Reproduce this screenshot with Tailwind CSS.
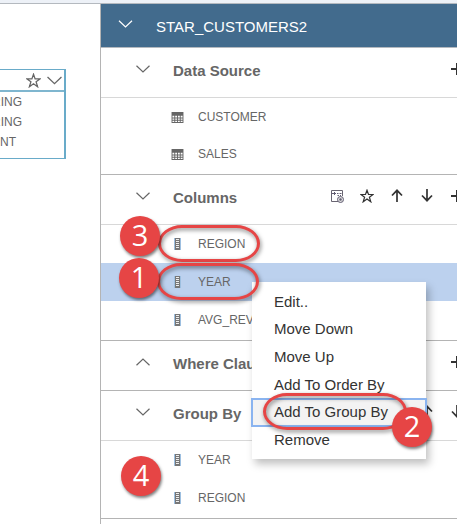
<!DOCTYPE html>
<html lang="en">
<head>
<meta charset="utf-8">
<title>STAR_CUSTOMERS2</title>
<script src="https://cdn.jsdelivr.net/npm/@tailwindcss/browser@4"></script>
</head>
<body class="relative flex min-h-screen flex-col overflow-hidden bg-white font-['Liberation_Sans',Arial,sans-serif] text-[#666]">
<svg class="hidden" aria-hidden="true">
  <symbol id="down" viewBox="0 0 14 8"><path d="M.5.7 7 7 13.500.7" fill="none" stroke="currentColor" stroke-width="1.200"/></symbol>
  <symbol id="star" viewBox="0 0 14 14"><path d="M7 1.200 8.500 5.500H13L9.400 8.200 10.800 12.800 7 10 3.200 12.800 4.600 8.200 1 5.500H5.500Z" fill="none" stroke="currentColor" stroke-width="1.200"/></symbol>
  <symbol id="plus" viewBox="0 0 12 12"><path d="M0 6H12M6 0V12" stroke="currentColor" stroke-width="2"/></symbol>
  <symbol id="arrow" viewBox="0 0 12 13"><path d="M6 13V1.500M1 6.500 6 1.300 11 6.500" fill="none" stroke="currentColor" stroke-width="1.700"/></symbol>
  <symbol id="table" viewBox="0 0 13 12"><path d="M0 0H13V12H0Z" fill="#666"/><path d="M1 4h2v2H1zM4 4h2v2H4zM7 4h2v2H7zM10 4h2v2h-2zM1 7h2v1.500H1zM4 7h2v1.500H4zM7 7h2v1.500H7zM10 7h2v1.500h-2zM1 9.500h2V11H1zM4 9.500h2V11H4zM7 9.500h2V11H7zM10 9.500h2V11h-2z" fill="#fff"/></symbol>
  <symbol id="column" viewBox="0 0 7 12"><path d="M0 0H1V12H0ZM6 0H7V12H6Z" fill="#9dbfe0"/><path d="M1 0H6V12H1Z" fill="#777"/><path d="M2 1.500H5M2 3.500H5M2 5.500H5M2 7.500H5M2 9.500H5" stroke="#eee"/></symbol>
  <symbol id="form" viewBox="0 0 14 14"><path d="M8 12.500H1.500V1.500H12.500V7" fill="none" stroke="#686471"/><path d="M1.500 4.500H6M4.500 3V6M7 4.500H8.500M9.500 4.500H11.500M7.500 6.500H9M10 6.500H11" stroke="#625d72"/><circle cx="10.500" cy="10.500" r="3" fill="#ddd" stroke="#625d72"/><circle cx="10.500" cy="10.500" r="1.200" fill="#625d72"/></symbol>
</svg>

<div class="h-[3px] bg-[#edf1f7]"></div>
<div class="flex flex-1 border-t border-[#b4b9bf]">
  <div class="w-[100px] shrink-0 overflow-hidden pt-[65px]">
    <div class="mr-[34px] h-[90px] border-y border-r-2 border-[#69abc9]">
      <div class="flex h-[22px] items-center justify-end gap-[6px] border-b-2 border-[#7fb6cf] pr-[2px]">
        <button aria-label="Favorite"><svg class="size-[15px]"><use href="#star"/></svg></button>
        <button aria-label="Expand"><svg class="h-[9px] w-[15px]"><use href="#down"/></svg></button>
      </div>
      <ul class="flex flex-col text-[12px] leading-5">
        <li class="-ml-2">RING</li>
        <li class="-ml-2">RING</li>
        <li>NT</li>
      </ul>
    </div>
  </div>

  <main class="min-w-0 flex-1 overflow-hidden border-l border-[#b4b4b4]">
    <header class="flex h-11 items-center border-b border-[#b4b9bf] bg-[#426b8d] pl-[17px] text-white">
      <button aria-label="Collapse STAR_CUSTOMERS2" class="w-[38px] pb-1"><svg class="h-[8px] w-[15px]"><use href="#down"/></svg></button>
      <h1 class="pt-1 text-[15px]">STAR_CUSTOMERS2</h1>
    </header>

    <section class="border-b border-[#b4b4b4]">
      <div class="flex h-[50px] items-center border-b border-[#d8d8d8] pl-[35px]">
        <button aria-label="Collapse" class="w-[37px] pb-2"><svg class="h-[8px] w-[14px]"><use href="#down"/></svg></button>
        <h2 class="pb-[2px] text-[15px] font-bold">Data Source</h2>
        <div class="-mr-[15px] ml-auto flex pb-2 text-[#333]">
          <button aria-label="Add" class="flex w-[30px] justify-center"><svg class="size-[12px]"><use href="#plus"/></svg></button>
        </div>
      </div>
      <ul class="text-[12px]">
        <li class="flex h-[38px] items-center gap-[14px] pl-[70px]"><svg class="h-[11px] w-[13px]"><use href="#table"/></svg>CUSTOMER</li>
        <li class="flex h-[38px] items-center gap-[14px] pb-[2px] pl-[70px]"><svg class="h-[11px] w-[13px]"><use href="#table"/></svg>SALES</li>
      </ul>
    </section>

    <section class="border-b border-[#b4b4b4]">
      <div class="flex h-[50px] items-center border-b border-[#d8d8d8] pl-[35px]">
        <button aria-label="Collapse" class="w-[37px] pb-2"><svg class="h-[8px] w-[14px]"><use href="#down"/></svg></button>
        <h2 class="pb-[2px] text-[15px] font-bold">Columns</h2>
        <div class="-mr-[15px] ml-auto flex items-center pb-2 text-[#333]">
          <button aria-label="Form" class="flex w-[30px] justify-center"><svg class="size-[14px]"><use href="#form"/></svg></button>
          <button aria-label="Favorite" class="flex w-[30px] justify-center"><svg class="size-[14px]"><use href="#star"/></svg></button>
          <button aria-label="Move up" class="flex w-[30px] justify-center"><svg class="h-[13px] w-[12px]"><use href="#arrow"/></svg></button>
          <button aria-label="Move down" class="flex w-[30px] justify-center"><svg class="h-[13px] w-[12px] rotate-180"><use href="#arrow"/></svg></button>
          <button aria-label="Add" class="flex w-[30px] justify-center"><svg class="size-[12px]"><use href="#plus"/></svg></button>
        </div>
      </div>
      <ul class="pb-px text-[12px]">
        <li class="flex h-[38px] items-center gap-[17px] pl-[73px]"><svg class="h-[12px] w-[7px]"><use href="#column"/></svg>REGION</li>
        <li class="flex h-[38px] items-center gap-[17px] bg-[#bcd1ee] pl-[73px]"><svg class="h-[12px] w-[7px]"><use href="#column"/></svg>YEAR</li>
        <li class="flex h-[38px] items-center gap-[17px] pl-[73px]"><svg class="h-[12px] w-[7px]"><use href="#column"/></svg>AVG_REVENUE</li>
      </ul>
    </section>

    <section class="flex h-[50px] items-center border-b border-[#b4b4b4] pl-[35px]">
      <button aria-label="Expand" class="w-[37px] pb-2"><svg class="h-[8px] w-[14px] rotate-180"><use href="#down"/></svg></button>
      <h2 class="pb-[2px] text-[15px] font-bold">Where Clause</h2>
      <div class="-mr-[15px] ml-auto flex pb-2 text-[#333]">
        <button aria-label="Add" class="flex w-[30px] justify-center"><svg class="size-[12px]"><use href="#plus"/></svg></button>
      </div>
    </section>

    <section class="border-b border-[#b4b4b4]">
      <div class="flex h-[50px] items-center border-b border-[#d8d8d8] pl-[35px]">
        <button aria-label="Collapse" class="w-[37px] pb-2"><svg class="h-[8px] w-[14px]"><use href="#down"/></svg></button>
        <h2 class="pb-[2px] text-[15px] font-bold">Group By</h2>
        <div class="-mr-[15px] ml-auto flex pb-2 text-[#333]">
          <button aria-label="Move up" class="flex w-[30px] justify-center"><svg class="h-[13px] w-[12px]"><use href="#arrow"/></svg></button>
          <button aria-label="Move down" class="flex w-[30px] justify-center"><svg class="h-[13px] w-[12px] rotate-180"><use href="#arrow"/></svg></button>
        </div>
      </div>
      <ul class="pb-px text-[12px]">
        <li class="flex h-[38px] items-center gap-[17px] pl-[73px]"><svg class="h-[12px] w-[7px]"><use href="#column"/></svg>YEAR</li>
        <li class="flex h-[38px] items-center gap-[17px] pl-[73px]"><svg class="h-[12px] w-[7px]"><use href="#column"/></svg>REGION</li>
      </ul>
    </section>
  </main>
</div>

<div role="menu" class="absolute top-[282px] left-[252px] grid h-[177px] w-[174px] auto-rows-fr bg-white pt-[6px] pb-[5px] text-[15px] text-[#333] shadow-[3px_5px_8px_rgba(0,0,0,0.25)]">
  <button role="menuitem" class="pl-[22px] text-left">Edit..</button>
  <button role="menuitem" class="pl-[22px] text-left">Move Down</button>
  <button role="menuitem" class="pl-[22px] text-left">Move Up</button>
  <button role="menuitem" class="pl-[22px] text-left">Add To Order By</button>
  <button role="menuitem" class="bg-[#f3f3f3] pl-[22px] text-left outline-2 -outline-offset-1 outline-[#8ab4f0]">Add To Group By</button>
  <button role="menuitem" class="pl-[22px] text-left">Remove</button>
</div>

<div class="absolute top-[225px] left-[158px] h-[37px] w-[102px] rounded-[24px/50%] border-[3px] border-[#e64545] drop-shadow-[1px_2px_2px_rgba(0,0,0,0.5)]"></div>
<div class="absolute top-[263px] left-[157px] h-[37px] w-[102px] rounded-[24px/50%] border-[3px] border-[#e64545] drop-shadow-[1px_2px_2px_rgba(0,0,0,0.5)]"></div>
<div class="absolute top-[393px] left-[263px] h-[37px] w-[144px] rounded-[24px/50%] border-[3px] border-[#e64545] drop-shadow-[1px_2px_2px_rgba(0,0,0,0.5)]"></div>

<span class="absolute top-[216px] left-[120px] flex size-10 items-center justify-center rounded-full bg-[#e64545] pb-[2px] font-['Open_Sans',sans-serif] text-[29px] text-white shadow-[1px_2px_3px_rgba(0,0,0,0.5)]">3</span>
<span class="absolute top-[258px] left-[119px] flex size-10 items-center justify-center rounded-full bg-[#e64545] pb-[2px] font-['Open_Sans',sans-serif] text-[29px] text-white shadow-[1px_2px_3px_rgba(0,0,0,0.5)]">1</span>
<span class="absolute top-[407px] left-[392px] flex size-10 items-center justify-center rounded-full bg-[#e64545] pb-[2px] font-['Open_Sans',sans-serif] text-[29px] text-white shadow-[1px_2px_3px_rgba(0,0,0,0.5)]">2</span>
<span class="absolute top-[456px] left-[121px] flex size-10 items-center justify-center rounded-full bg-[#e64545] pb-[2px] font-['Open_Sans',sans-serif] text-[29px] text-white shadow-[1px_2px_3px_rgba(0,0,0,0.5)]">4</span>
</body>
</html>
